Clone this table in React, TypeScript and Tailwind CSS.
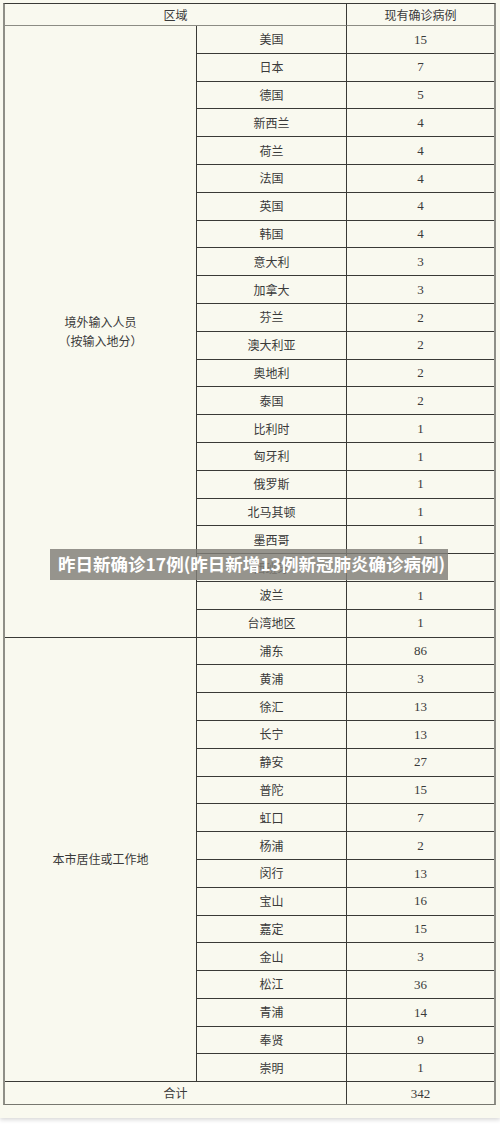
const abroad: [string, number][] = [
  ["美国", 15],
  ["日本", 7],
  ["德国", 5],
  ["新西兰", 4],
  ["荷兰", 4],
  ["法国", 4],
  ["英国", 4],
  ["韩国", 4],
  ["意大利", 3],
  ["加拿大", 3],
  ["芬兰", 2],
  ["澳大利亚", 2],
  ["奥地利", 2],
  ["泰国", 2],
  ["比利时", 1],
  ["匈牙利", 1],
  ["俄罗斯", 1],
  ["北马其顿", 1],
  ["墨西哥", 1],
  ["西班牙", 1],
  ["波兰", 1],
  ["台湾地区", 1],
];

const local: [string, number][] = [
  ["浦东", 86],
  ["黄浦", 3],
  ["徐汇", 13],
  ["长宁", 13],
  ["静安", 27],
  ["普陀", 15],
  ["虹口", 7],
  ["杨浦", 2],
  ["闵行", 13],
  ["宝山", 16],
  ["嘉定", 15],
  ["金山", 3],
  ["松江", 36],
  ["青浦", 14],
  ["奉贤", 9],
  ["崇明", 1],
];

const cell =
  "flex items-center justify-center border-b border-r border-[#3a3a36] text-[12px] text-[#3a3a3a]";
const num = "font-['Liberation_Serif',serif] text-[13px]";

function Rows({ data }: { data: [string, number][] }) {
  return (
    <>
      {data.map(([name, n]) => (
        <div key={name} className="contents">
          <div className={cell}>{name}</div>
          <div className={`${cell} border-r-0 ${num}`}>{n}</div>
        </div>
      ))}
    </>
  );
}

export default function App() {
  return (
    <div className="h-[1129px] w-[500px] bg-white font-['Noto_Sans_CJK_SC','Noto_Sans',sans-serif]">
      <div className="relative h-[1118px] bg-[#f9f9ef] pl-[3px] pt-[3px] shadow-[0_2px_4px_rgba(0,0,0,0.15)]">
        {/* 表格 */}
        <div className="grid w-[493px] grid-cols-[192px_150px_147px] grid-rows-[22px_repeat(38,27.8px)_22px] border-b border-l-2 border-r-2 border-t border-b-[#77776f] border-l-[#8f8f87] border-r-[#8f8f87] border-t-[#3a3a36]">
          <div className={`${cell} col-span-2 border-b-[#8c8c84]`}>区域</div>
          <div className={`${cell} border-r-0 border-b-[#8c8c84]`}>现有确诊病例</div>

          <div className={`${cell} row-span-[22] flex-col leading-[19px]`}>
            <span>境外输入人员</span>
            <span>（按输入地分）</span>
          </div>
          <div className="col-span-2 row-span-[22] grid grid-cols-[150px_147px] grid-rows-[repeat(22,27.8px)]">
            <Rows data={abroad} />
          </div>

          <div className={`${cell} row-span-[16]`}>本市居住或工作地</div>
          <div className="col-span-2 row-span-[16] grid grid-cols-[150px_147px] grid-rows-[repeat(16,27.8px)]">
            <Rows data={local} />
          </div>

          <div className={`${cell} col-span-2 border-b-0`}>合计</div>
          <div className={`${cell} border-b-0 border-r-0 ${num}`}>342</div>
        </div>

        {/* 标题浮层 */}
        <div className="absolute left-[50px] top-[549px] flex h-[31px] w-[398px] items-center bg-[rgba(128,126,119,0.82)] pl-[8px] text-[17.5px] font-bold text-white">
          昨日新确诊17例(昨日新增13例新冠肺炎确诊病例)
        </div>
      </div>
    </div>
  );
}
